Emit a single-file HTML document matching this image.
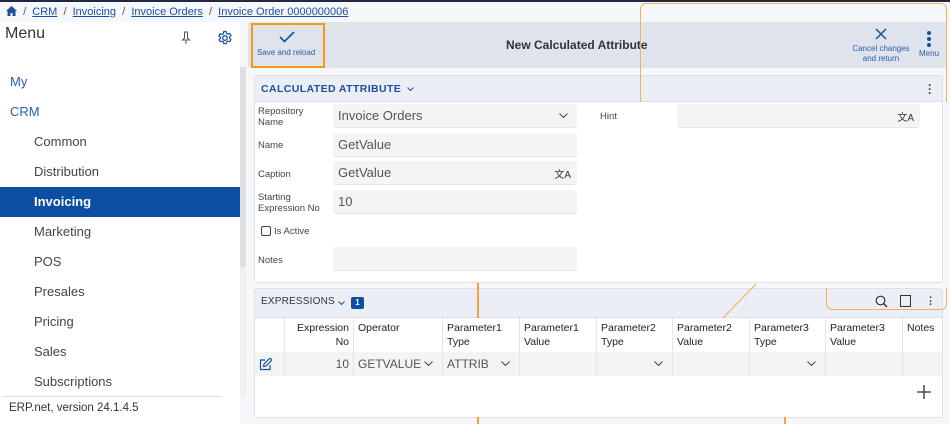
<!DOCTYPE html>
<html><head><style>
*{box-sizing:border-box;margin:0;padding:0}
body{width:950px;height:424px;overflow:hidden;background:#f6f7fb;font-family:"Liberation Sans",sans-serif;position:relative;color:#333}
.a{position:absolute}
.bc{top:0;left:0;width:950px;height:22px;background:#f6f7fb;border-top:2px solid #1e2a44;font-size:10.5px;color:#555}
.bc a{color:#1a4fa0;text-decoration:underline}
.side{top:22px;left:0;width:240px;height:402px;background:#fff}
.side .it{position:absolute;left:0;width:240px;height:30px;line-height:30px;font-size:13px;color:#444;padding-left:34px}
.lab{font-size:9.5px;color:#444;position:absolute;left:258px;line-height:11px}
.inp{position:absolute;left:333px;width:244px;height:24px;background:#f3f4f5;border-bottom:1px solid #e2e5ea;border-radius:3px;font-size:13px;color:#555;padding:4px 5px}
.th{position:absolute;top:318px;height:34px;font-size:10.5px;color:#222;padding:3px 4px;line-height:14px;border-left:1px solid #e4e6ea}
.td{position:absolute;top:352px;height:24px;background:#f3f4f5;border-left:1px solid #e4e6ea;font-size:12px;color:#555;padding:5px 4px}
.or{position:absolute;background:#f0a43a}
.cv{position:absolute;right:9px;top:9px}
</style></head><body>
<div class="a bc"><div style="position:absolute;left:6px;top:4px;font-size:11px">
<svg width="11" height="10" viewBox="0 0 11 10" style="vertical-align:-1px"><path d="M5.5 0L0 5h1.5v5h3V7h2v3h3V5H11z" fill="#1a4fa0"/></svg>
&nbsp;/&nbsp; <a>CRM</a> &nbsp;/&nbsp; <a>Invoicing</a> &nbsp;/&nbsp; <a>Invoice Orders</a> &nbsp;/&nbsp; <a>Invoice Order 0000000006</a></div></div>

<div class="a side">
<div class="a" style="left:5px;top:3px;font-size:16px;color:#333">Menu</div>
<svg class="a" style="left:181px;top:9px" width="10" height="14" viewBox="0 0 10 14"><path d="M3 1h4M3.5 1v6l-2 2h7l-2-2V1M5 9v4" fill="none" stroke="#555" stroke-width="1"/></svg>
<svg class="a" style="left:217px;top:8px" width="16" height="16" viewBox="0 0 16 16"><circle cx="8" cy="8" r="2.3" fill="none" stroke="#1a4fa0" stroke-width="1.3"/><path d="M6.8 1.5h2.4l.4 1.8 1.4.8 1.8-.6 1.2 2-1.4 1.3v1.6l1.4 1.3-1.2 2-1.8-.6-1.4.8-.4 1.8H6.8l-.4-1.8-1.4-.8-1.8.6-1.2-2 1.4-1.3V7.2L1.9 5.9l1.2-2 1.8.6 1.4-.8z" fill="none" stroke="#1a4fa0" stroke-width="1.2"/></svg>
<div class="it" style="top:45px;padding-left:10px;color:#2a5eab">My</div>
<div class="it" style="top:75px;padding-left:10px;color:#2a5eab">CRM</div>
<div class="it" style="top:105px">Common</div>
<div class="it" style="top:135px">Distribution</div>
<div class="it" style="top:165px;background:#0b4ea2;color:#fff;font-weight:bold">Invoicing</div>
<div class="it" style="top:195px">Marketing</div>
<div class="it" style="top:225px">POS</div>
<div class="it" style="top:255px">Presales</div>
<div class="it" style="top:285px">Pricing</div>
<div class="it" style="top:315px">Sales</div>
<div class="it" style="top:345px">Subscriptions</div>
<div class="a" style="left:2px;top:374px;width:220px;border-top:1px solid #ddd"></div>
<div class="a" style="left:9px;top:380px;font-size:11.5px;color:#333">ERP.net, version 24.1.4.5</div>
</div>
<div class="a" style="left:240px;top:67px;width:6px;height:330px;background:#f0f0f0"></div>
<div class="a" style="left:240px;top:67px;width:6px;height:200px;background:#e0e0e0"></div>

<div class="a" style="left:248px;top:22px;width:698px;height:46px;background:#dee3ec;border-radius:3px"></div>
<div class="a" style="left:251px;top:23px;width:74px;height:45px;border:2px solid #f29a1b"></div>
<svg class="a" style="left:279px;top:31px" width="16" height="12" viewBox="0 0 16 12"><path d="M1 6l4.5 4.5L15 1" fill="none" stroke="#1a4fa0" stroke-width="1.6"/></svg>
<div class="a" style="left:257px;top:48px;font-size:8px;color:#2a5eab">Save and reload</div>
<div class="a" style="left:506px;top:38px;font-size:12px;font-weight:bold;color:#333">New Calculated Attribute</div>
<svg class="a" style="left:875px;top:28px" width="12" height="12" viewBox="0 0 12 12"><path d="M1 1l10 10M11 1L1 11" stroke="#1a4fa0" stroke-width="1.5"/></svg>
<div class="a" style="left:850px;top:44px;width:62px;font-size:8px;color:#2a5eab;text-align:center;line-height:10px">Cancel changes<br>and return</div>
<div class="a" style="left:927px;top:31px;width:4px;height:4px;border-radius:2px;background:#1a4fa0"></div>
<div class="a" style="left:927px;top:37px;width:4px;height:4px;border-radius:2px;background:#1a4fa0"></div>
<div class="a" style="left:927px;top:43px;width:4px;height:4px;border-radius:2px;background:#1a4fa0"></div>
<div class="a" style="left:919px;top:49px;font-size:8px;color:#2a5eab">Menu</div>

<!-- panel 1 -->
<div class="a" style="left:254px;top:75px;width:689px;height:208px;background:#fff;border:1px solid #dde0e6;border-radius:3px"></div>
<div class="a" style="left:255px;top:76px;width:687px;height:26px;background:#eceef6;border-bottom:1px dotted #ccd"></div>
<div class="a" style="left:261px;top:83px;font-size:10.5px;font-weight:bold;color:#1a4fa0;letter-spacing:.4px">CALCULATED ATTRIBUTE</div>
<svg class="a" style="left:407px;top:87px" width="7" height="4"><path d="M.5.5l3 3 3-3" fill="none" stroke="#1a4fa0"/></svg>
<div class="a" style="left:928px;top:83px;font-size:12px;font-weight:bold;color:#444;line-height:4px">·<br>·<br>·</div>
<div class="lab" style="top:106px">Repository<br>Name</div>
<div class="inp" style="top:104px">Invoice Orders<svg class="cv" width="9" height="5"><path d="M.5.5l4 4 4-4" fill="none" stroke="#444"/></svg></div>
<div class="lab" style="top:140px">Name</div>
<div class="inp" style="top:133px">GetValue</div>
<div class="lab" style="top:169px">Caption</div>
<div class="inp" style="top:161px">GetValue<span style="position:absolute;right:6px;top:5px;font-size:10px;color:#333">文A</span></div>
<div class="lab" style="top:192px">Starting<br>Expression No</div>
<div class="inp" style="top:190px">10</div>
<div class="a" style="left:261px;top:226px;width:10px;height:10px;border:1px solid #444;border-radius:2px"></div>
<div class="a" style="left:274px;top:226px;font-size:9.5px;color:#444">Is Active</div>
<div class="lab" style="top:255px">Notes</div>
<div class="inp" style="top:247px"></div>
<div class="lab" style="left:600px;top:111px">Hint</div>
<div class="inp" style="left:677px;top:104px;width:243px"><span style="position:absolute;right:6px;top:5px;font-size:10px;color:#333">文A</span></div>

<!-- panel 2 -->
<div class="a" style="left:254px;top:288px;width:689px;height:130px;background:#fff;border:1px solid #dde0e6;border-radius:3px"></div>
<div class="a" style="left:255px;top:289px;width:687px;height:29px;background:#eceef6;border-bottom:1px dotted #ccd"></div>
<div class="a" style="left:261px;top:296px;font-size:10px;color:#333;letter-spacing:.2px">EXPRESSIONS</div>
<svg class="a" style="left:338px;top:301px" width="7" height="4"><path d="M.5.5l3 3 3-3" fill="none" stroke="#444"/></svg>
<div class="a" style="left:351px;top:297px;width:13px;height:12px;background:#0b4ea2;border-radius:2px;color:#fff;font-size:8px;font-weight:bold;text-align:center;line-height:12px">1</div>
<svg class="a" style="left:875px;top:295px" width="13" height="13" viewBox="0 0 13 13"><circle cx="5.5" cy="5.5" r="4.3" fill="none" stroke="#333" stroke-width="1.2"/><path d="M8.5 8.5L12 12" stroke="#333" stroke-width="1.3"/></svg>
<div class="a" style="left:900px;top:295px;width:11px;height:12px;border:1px solid #333"></div>
<div class="a" style="left:929px;top:297px;font-size:11px;font-weight:bold;color:#444;line-height:3.5px">·<br>·<br>·</div>
<div class="th" style="left:255px;width:29px;border-left:none"></div>
<div class="th" style="left:284px;width:69px;text-align:right">Expression<br>No</div>
<div class="th" style="left:353px;width:89px">Operator</div>
<div class="th" style="left:442px;width:77px">Parameter1<br>Type</div>
<div class="th" style="left:519px;width:77px">Parameter1<br>Value</div>
<div class="th" style="left:596px;width:76px">Parameter2<br>Type</div>
<div class="th" style="left:672px;width:77px">Parameter2<br>Value</div>
<div class="th" style="left:749px;width:76px">Parameter3<br>Type</div>
<div class="th" style="left:825px;width:77px">Parameter3<br>Value</div>
<div class="th" style="left:902px;width:40px">Notes</div>
<div class="a" style="left:255px;top:352px;width:687px;height:24px;background:#f3f4f5"></div>
<svg class="a" style="left:259px;top:358px" width="13" height="13" viewBox="0 0 13 13"><path d="M6 2H1.5v9.5H11V7M4.5 8.5l.5-2.5 6-6 2 2-6 6z" fill="none" stroke="#1a4fa0" stroke-width="1.2"/></svg>
<div class="td" style="left:284px;width:69px;text-align:right">10</div>
<div class="td" style="left:353px;width:89px">GETVALUE<svg class="cv" width="9" height="5"><path d="M.5.5l4 4 4-4" fill="none" stroke="#444"/></svg></div>
<div class="td" style="left:442px;width:77px">ATTRIB<svg class="cv" width="9" height="5"><path d="M.5.5l4 4 4-4" fill="none" stroke="#444"/></svg></div>
<div class="td" style="left:519px;width:77px"></div>
<div class="td" style="left:596px;width:76px"><svg class="cv" width="9" height="5"><path d="M.5.5l4 4 4-4" fill="none" stroke="#444"/></svg></div>
<div class="td" style="left:672px;width:77px"></div>
<div class="td" style="left:749px;width:76px"><svg class="cv" width="9" height="5"><path d="M.5.5l4 4 4-4" fill="none" stroke="#444"/></svg></div>
<div class="td" style="left:825px;width:77px"></div>
<div class="td" style="left:902px;width:40px"></div>
<svg class="a" style="left:917px;top:385px" width="14" height="14"><path d="M7 0v14M0 7h14" stroke="#333" stroke-width="1.3"/></svg>

<!-- orange overlay lines -->
<div class="a" style="left:640px;top:3px;width:307px;height:99px;border:1.5px solid #f2b25c;border-bottom:none;border-radius:6px 6px 0 0"></div>
<div class="a" style="left:826px;top:288px;width:121px;height:22px;border:1.5px solid #f2b25c;border-top:none;border-radius:0 0 6px 6px"></div>
<div class="or" style="left:477px;top:283px;width:1.5px;height:35px"></div>
<div class="or" style="left:477px;top:417px;width:1.5px;height:7px"></div>
<div class="or" style="left:784px;top:417px;width:1.5px;height:7px"></div>
<svg class="a" style="left:718px;top:283px" width="40" height="36"><path d="M38 1L5 35" stroke="#f2b25c" stroke-width="1.2"/></svg>
</body></html>
